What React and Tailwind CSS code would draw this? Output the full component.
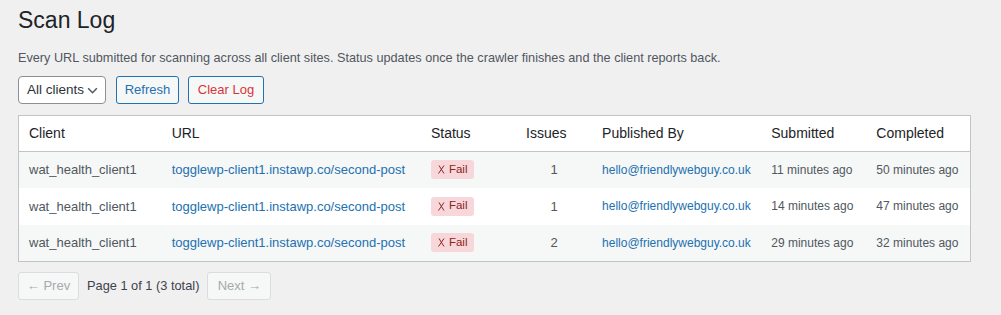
import React from 'react';

const rows = [
    { client: 'wat_health_client1', url: 'togglewp-client1.instawp.co/second-post', issues: 1, by: 'hello@friendlywebguy.co.uk', submitted: '11 minutes ago', completed: '50 minutes ago' },
    { client: 'wat_health_client1', url: 'togglewp-client1.instawp.co/second-post', issues: 1, by: 'hello@friendlywebguy.co.uk', submitted: '14 minutes ago', completed: '47 minutes ago' },
    { client: 'wat_health_client1', url: 'togglewp-client1.instawp.co/second-post', issues: 2, by: 'hello@friendlywebguy.co.uk', submitted: '29 minutes ago', completed: '32 minutes ago' },
];

export default function App() {
    return (
        <div className="min-h-[315px] bg-[#f0f0f1] px-[18px] text-[13px] text-[#3c434a]" style={{ fontFamily: '"Liberation Sans", Arial, sans-serif' }}>
            <h1 className="pt-[6px] text-[23px] leading-[29px] text-[#1d2327]">Scan Log</h1>
            <p className="mt-[13px] text-[12.7px] leading-[20px] text-[#50575e]">
                Every URL submitted for scanning across all client sites. Status updates once the crawler finishes and the client reports back.
            </p>
            <div className="mt-[8px] flex items-center">
                <div className="flex h-[28px] w-[88px] items-center justify-between rounded-[4px] border border-[#8c8f94] bg-white pl-[8px] pr-[6px] text-[13.5px] text-[#2c3338]">
                    <span>All clients</span>
                    <svg width="13" height="13" viewBox="0 0 12 12" fill="none" stroke="#50575e" strokeWidth="1.4">
                        <path d="M2 4l4 4 4-4" />
                    </svg>
                </div>
                <button className="ml-[10px] h-[28px] w-[63px] rounded-[3px] border border-[#2271b1] bg-[#f6f7f7] text-[13px] text-[#2271b1]">Refresh</button>
                <button className="ml-[9px] h-[28px] w-[76px] rounded-[3px] border border-[#2271b1] bg-[#f6f7f7] text-[13px] text-[#d63638]">Clear Log</button>
            </div>
            <table className="mt-[11px] w-[953px] table-fixed border border-[#c3c4c7] bg-white">
                <thead>
                    <tr className="h-[36px] border-b border-[#c3c4c7] text-left text-[14px] text-[#1d2327]">
                        <th className="w-[143px] pl-[10px] font-normal">Client</th>
                        <th className="w-[259px] pl-[10px] font-normal">URL</th>
                        <th className="w-[95px] pl-[10px] font-normal">Status</th>
                        <th className="w-[76px] pl-[10px] font-normal">Issues</th>
                        <th className="w-[169px] pl-[10px] font-normal">Published By</th>
                        <th className="w-[105px] pl-[10px] font-normal">Submitted</th>
                        <th className="w-[104px] pl-[10px] font-normal">Completed</th>
                    </tr>
                </thead>
                <tbody>
                    {rows.map((r, i) => (
                        <tr key={i} className={`h-[36.5px] ${i % 2 === 0 ? 'bg-[#f6f7f7]' : 'bg-white'}`}>
                            <td className="pl-[10px] text-[#50575e]">{r.client}</td>
                            <td className="pl-[10px] text-[#2271b1]">{r.url}</td>
                            <td className="pl-[10px]">
                                <span className="inline-flex h-[19px] items-center gap-[4px] rounded-[3px] bg-[#f8d7da] px-[7px] text-[11.5px] text-[#8a2424]">
                                    <svg width="7" height="9" viewBox="0 0 7 9" fill="none" stroke="#8a2424" strokeWidth="1">
                                        <path d="M1 0.5l5 8M6 0.5l-5.5 8" />
                                    </svg>
                                    Fail
                                </span>
                            </td>
                            <td className="text-center text-[#50575e]">{r.issues}</td>
                            <td className="pl-[10px] text-[12px] text-[#2271b1]">{r.by}</td>
                            <td className="pl-[10px] text-[12px] text-[#50575e]">{r.submitted}</td>
                            <td className="pl-[10px] text-[12px] text-[#50575e]">{r.completed}</td>
                        </tr>
                    ))}
                </tbody>
            </table>
            <div className="mt-[10px] flex items-center">
                <button disabled className="h-[28px] w-[61px] rounded-[3px] border border-[#dcdcde] bg-[#f6f7f7] text-[13px] text-[#a7aaad]">← Prev</button>
                <span className="ml-[8px] text-[12.8px] text-[#3c434a]">Page 1 of 1 (3 total)</span>
                <button disabled className="ml-[8px] h-[28px] w-[64px] rounded-[3px] border border-[#dcdcde] bg-[#f6f7f7] text-[13px] text-[#a7aaad]">Next →</button>
            </div>
        </div>
    );
}
